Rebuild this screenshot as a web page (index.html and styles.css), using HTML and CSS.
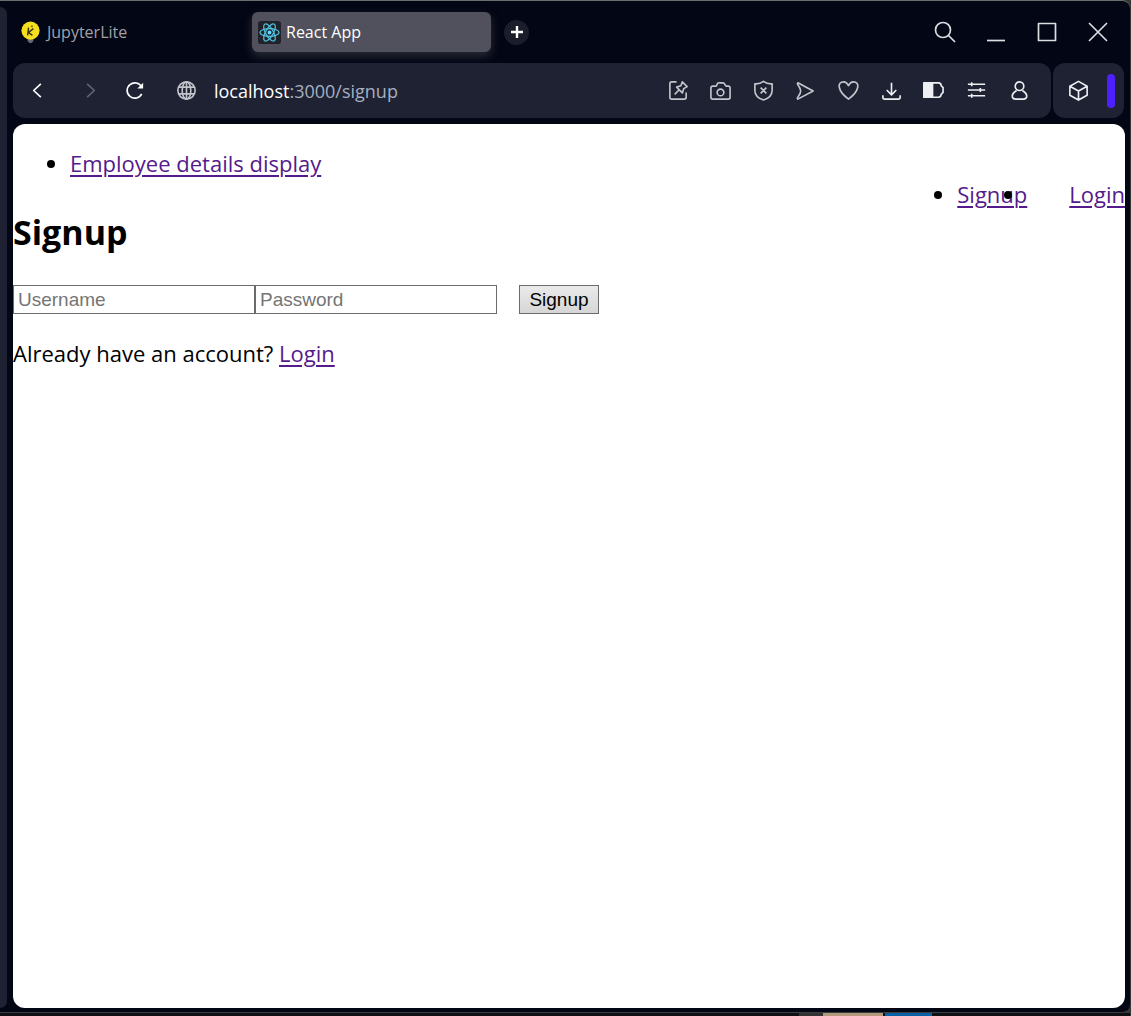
FILE: index.html
```html
<!DOCTYPE html>
<html lang="en">
<head>
<meta charset="utf-8">
<title>React App</title>
<link rel="stylesheet" href="styles.css">
</head>
<body>
<div class="window">
  <aside class="rail"></aside>
  <div class="browser">
    <header class="tabs">
      <button class="tab" type="button">
        <svg class="favicon" viewBox="0 0 24 24"><path d="M9 18h6v3l-2 2h-2l-2-2z" fill="#666970"/><circle cx="12" cy="10" r="9.500" fill="#f7de1d"/><path d="M13 5l1 1M10 7l-1 8M15 8l-5 4 4 3" fill="none" stroke="#37340f" stroke-width="1.500"/></svg>
        JupyterLite
      </button>
      <button class="tab tab-active" type="button">
        <svg class="favicon" viewBox="0 0 24 24"><rect width="24" height="24" rx="3" fill="#20232a"/><g fill="none" stroke="#53c1de" stroke-width="1.300"><ellipse cx="12" cy="12" rx="10" ry="4"/><ellipse cx="12" cy="12" rx="10" ry="4" transform="rotate(60 12 12)"/><ellipse cx="12" cy="12" rx="10" ry="4" transform="rotate(120 12 12)"/></g><circle cx="12" cy="12" r="2" fill="#61dafb"/></svg>
        React App
      </button>
      <button class="new-tab" type="button" aria-label="New tab"><svg viewBox="0 0 12 12"><path d="M6 0v12M0 6h12"/></svg></button>
      <div class="controls">
        <button type="button" aria-label="Search"><svg class="icon" viewBox="0 0 24 24"><circle cx="10" cy="10" r="7.500"/><path d="M15.500 15.500l6.500 6.500"/></svg></button>
        <button type="button" aria-label="Minimize"><svg class="icon" viewBox="0 0 24 24"><path d="M3 20.500h18"/></svg></button>
        <button type="button" aria-label="Maximize"><svg class="icon" viewBox="0 0 24 24"><path d="M3.500 3.500h17v17h-17z"/></svg></button>
        <button type="button" aria-label="Close"><svg class="icon" viewBox="0 0 24 24"><path d="M3 3l18 18M21 3L3 21"/></svg></button>
      </div>
    </header>
    <div class="toolbars">
      <div class="toolbar">
        <button class="back" type="button" aria-label="Back"><svg class="icon" viewBox="0 0 24 24"><path d="M15.500 5L8 12l7.500 7"/></svg></button>
        <button class="forward" type="button" aria-label="Forward"><svg class="icon" viewBox="0 0 24 24"><path d="M8.500 5l7.500 7-7.500 7"/></svg></button>
        <button class="reload" type="button" aria-label="Reload"><svg class="icon" viewBox="0 0 24 24"><path d="M19.500 8.500A8 8 0 1 0 19.500 15.500"/><path d="M21 4v6h-6z" fill="currentColor" stroke="none"/></svg></button>
        <button class="site" type="button" aria-label="Site information"><svg class="icon" viewBox="0 0 24 24"><circle cx="12" cy="12" r="9"/><ellipse cx="12" cy="12" rx="4.500" ry="9"/><path d="M12 3v18M4 8.500h16M4 15.500h16"/></svg></button>
        <div class="address" role="textbox" contenteditable="true" spellcheck="false" aria-label="Address"><span class="host">localhost</span>:3000/signup</div>
        <div class="actions">
          <button type="button" aria-label="Edit page"><svg class="icon" viewBox="0 0 24 24"><path d="M10 3H5q-2 0-2 2v14q0 2 2 2h13q2 0 2-2v-5"/><path d="M16 3l5 5-3.500 2-1.500 4.500-6-6L14.500 7zM12.500 11.500L8 16"/></svg></button>
          <button type="button" aria-label="Snapshot"><svg class="icon" viewBox="0 0 24 24"><path d="M4 7.500h3q1 0 1.500-2T11 4h3q2 0 2.500 1.500T18 7.500h2q2 0 2 2V19q0 2-2 2H4q-2 0-2-2V9.500q0-2 2-2z"/><circle cx="12" cy="14" r="3.500"/></svg></button>
          <button type="button" aria-label="Ad blocker"><svg class="icon" viewBox="0 0 24 24"><path d="M12 2.500q4 3 9 2.500v7q0 7-9 10-9-3-9-10V5q5 .500 9-2.500zM9 9l6 6M15 9l-6 6"/></svg></button>
          <button type="button" aria-label="My Flow"><svg class="icon" viewBox="0 0 24 24"><path d="M4 4l16 8.500L4 21q-1-1 0-2 3-4 3-6.500T4 6q-1-1 0-2z"/></svg></button>
          <button type="button" aria-label="Add bookmark"><svg class="icon" viewBox="0 0 24 24"><path d="M12 7q-2-4-5-4c-7 0-7 9 5 18C24 12 24 3 17 3q-3 0-5 4z"/></svg></button>
          <button class="bright" type="button" aria-label="Downloads"><svg class="icon" viewBox="0 0 24 24"><path d="M12 4v12M7 11.500l5 5 5-5M3 17v2q0 2 2 2h14q2 0 2-2v-2"/></svg></button>
          <button class="bright" type="button" aria-label="Battery saver"><svg class="icon" viewBox="0 0 24 24"><path d="M2 4h15q3 0 3 3l2 2v5l-2 2q0 3-3 3H2z"/><path d="M2 4h9v15H2z" fill="currentColor"/></svg></button>
          <button class="bright" type="button" aria-label="Easy setup"><svg class="icon" viewBox="0 0 24 24"><path d="M3 5.500h18M3 11.500h18M3 17.500h18M7 3.500v4M16 9.500v4M7 15.500v4"/></svg></button>
          <button class="bright" type="button" aria-label="Profile"><svg class="icon" viewBox="0 0 24 24"><circle cx="12" cy="7.500" r="4.500"/><path d="M9 12q-5 3-4.500 6.500Q5 21 8 21h8q3 0 3.500-2.500Q20 15 15 12"/></svg></button>
        </div>
      </div>
      <div class="extensions">
        <button class="bright" type="button" aria-label="Extensions"><svg class="icon" viewBox="0 0 24 24"><path d="M12 2.500l9 5v9.500l-9 5-9-5V7.500zM3 7.500l9 5 9-5M12 12.500V22"/></svg></button>
        <span class="accent"></span>
      </div>
    </div>
    <main class="page">
      <nav>
        <ul class="menu"><li><a href="#">Employee details display</a></li></ul>
        <ul class="menu menu-right"><li><a href="#">Signup</a></li><li><a class="login" href="#">Login</a></li></ul>
      </nav>
      <h2>Signup</h2>
      <form>
        <input type="text" placeholder="Username" aria-label="Username"><input type="password" placeholder="Password" aria-label="Password">
        <button class="submit" type="submit">Signup</button>
      </form>
      <p>Already have an account? <a href="#">Login</a></p>
    </main>
  </div>
</div>
<div class="desktop"><span class="app-gray"></span><span class="app-tan"></span><span class="app-blue"></span></div>
</body>
</html>
```
FILE: styles.css
```css
* { box-sizing: border-box; }
body {
  margin: 0;
  min-height: 100vh;
  display: flex;
  flex-direction: column;
  padding-right: 1px;
  background: #353735;
  font-family: "Open Sans", "Noto Sans", sans-serif;
}
button {
  display: flex;
  align-items: center;
  justify-content: center;
  flex: none;
  padding: 0;
  border: 0;
  background: none;
  color: #c3c5cb;
  font-family: inherit;
}
.icon {
  width: 24px;
  height: 24px;
  fill: none;
  stroke: currentColor;
  stroke-width: 1.7;
  stroke-linejoin: round;
}
.window {
  flex: 1;
  display: flex;
  gap: 6px;
  padding-right: 5px;
  padding-bottom: 4px;
  background: #030614;
  border-top: 1px solid #6c6e6e;
  border-bottom: 1px solid #3c3d40;
  border-radius: 0 8px 8px 0;
}
.rail {
  width: 7px;
  margin-top: 6px;
  background: #1e2233;
  border-radius: 0 8px 8px 0;
}
.browser { flex: 1; min-width: 0; display: flex; flex-direction: column; }
.tabs { display: flex; align-items: center; height: 62px; }
.tab {
  justify-content: flex-start;
  gap: 5px;
  width: 239px;
  height: 40px;
  padding-left: 6px;
  border-radius: 6px;
  color: #a0a2a9;
  font-size: 16px;
}
.tab-active { background: #50515c; color: #fff; box-shadow: 0 4px 10px #50515c80; }
.favicon { width: 23px; height: 23px; }
.new-tab { width: 25px; height: 25px; margin-left: 13px; border-radius: 50%; background: #1b1d2b; }
.new-tab svg { width: 12px; height: 12px; stroke: #fff; stroke-width: 2.4; }
.controls { display: flex; margin-left: auto; padding-right: 2px; }
.controls button { width: 51px; height: 40px; color: #dcdde1; }
.toolbars { display: flex; gap: 2px; height: 55px; margin-bottom: 6px; padding-right: 1px; }
.toolbar, .extensions { display: flex; align-items: center; background: #1e2233; border-radius: 12px; }
.toolbar { flex: 1; padding-right: 12px; }
.toolbar button { height: 40px; }
.toolbar .icon, .extensions .icon { width: 23px; height: 23px; }
.back { width: 48px; color: #fff; }
.forward { width: 58px; color: #62646f; }
.reload { width: 30px; color: #fff; }
.site { width: 24px; margin: 0 16px 0 25px; }
.address { flex: 1; color: #a7afc0; font-size: 18px; white-space: nowrap; }
.host { color: #fff; }
.actions { display: flex; justify-content: space-between; width: 381px; }
.actions button { width: 40px; }
.actions .bright, .extensions .bright { color: #eeeff2; }
.extensions { width: 71px; padding: 0 9px 0 14px; justify-content: space-between; }
.accent { width: 8px; height: 34px; border-radius: 4px; background: #4f20ff; }
.page {
  flex: 1;
  padding-top: 24px;
  background: #fff;
  border-radius: 12px;
  color: #000;
  font-size: 22px;
  line-height: 31px;
  overflow: hidden;
}
.menu { margin: 0; padding-left: 57px; }
.menu-right { display: flex; justify-content: flex-end; }
.login { margin-left: 42px; }
a { color: #551a8b; text-decoration-thickness: 2px; text-underline-offset: 3px; }
h2 { margin: 0 0 31px; font-size: 34px; line-height: 44px; }
form { display: flex; align-items: center; }
input, .submit {
  height: 29px;
  border: 1px solid #6b6b6b;
  border-radius: 0;
  font-family: "Liberation Sans", Arial, sans-serif;
  font-size: 19px;
}
input { width: 242px; padding: 0 4px; background: #fff; }
input::placeholder { color: #757575; }
.submit { width: 80px; margin-left: 22px; background: linear-gradient(#eaeaea, #d6d6d6); color: #000; }
p { margin: 24px 0; }
.desktop { display: flex; justify-content: flex-end; height: 3px; padding-right: 198px; background: #0e1013; }
.app-gray { width: 24px; background: #333; }
.app-tan { width: 60px; margin-right: 2px; background: #b3977a; }
.app-blue { width: 47px; background: #0860a4; }
```
